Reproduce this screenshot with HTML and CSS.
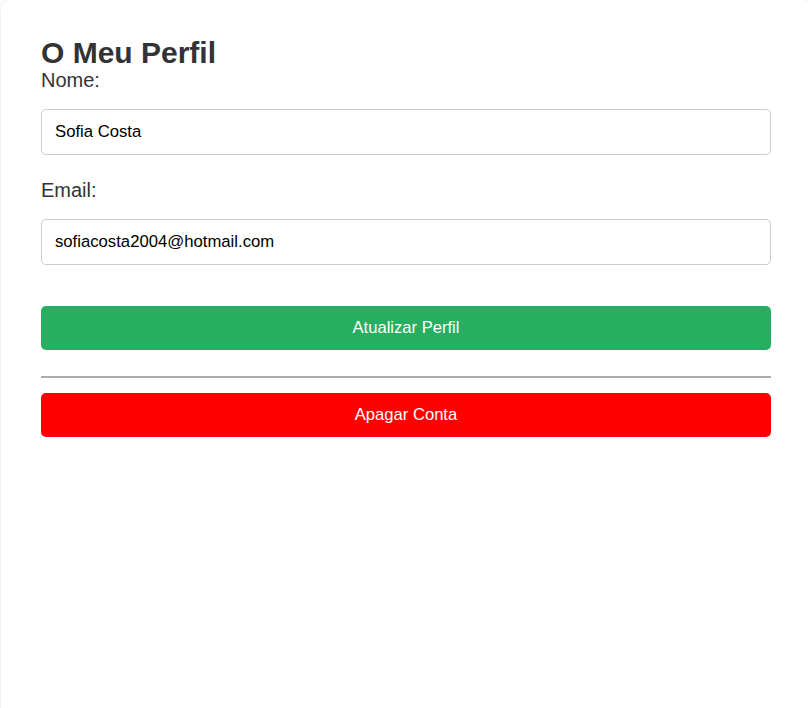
FILE: index.html
```html
<!DOCTYPE html>
<html lang="pt">
<head>
<meta charset="utf-8">
<title>O Meu Perfil</title>
<link rel="stylesheet" href="styles.css">
</head>
<body>
<div class="card">
  <h2 class="title">O Meu Perfil</h2>
  <form class="form">
    <label class="label" for="nome">Nome:</label>
    <input class="input" id="nome" type="text" value="Sofia Costa">
    <label class="label" for="email">Email:</label>
    <input class="input" id="email" type="email" value="sofiacosta2004@hotmail.com">
    <button class="btn btn-update" type="button">Atualizar Perfil</button>
  </form>
  <hr class="divider">
  <button class="btn btn-delete" type="button">Apagar Conta</button>
</div>
</body>
</html>
```

FILE: styles.css
```css
html, body {
  margin: 0;
  padding: 0;
  background: #fff;
}
body {
  font-family: "Liberation Sans", Arial, sans-serif;
  color: #333;
  overflow: hidden;
}
.card {
  box-sizing: border-box;
  width: 810px;
  min-height: 720px;
  margin-left: 1px;
  padding: 36px 40px 40px;
  background: #fff;
  border-radius: 8px;
  box-shadow: 0 0 3px rgba(0, 0, 0, 0.12);
}
.title {
  margin: 0;
  font-size: 30px;
  font-weight: bold;
  color: #333;
  line-height: 33px;
}
.form {
  display: flex;
  flex-direction: column;
}
.label {
  display: block;
  font-size: 20px;
  line-height: 23px;
  margin: 0 0 17px;
  color: #333;
}
.input {
  box-sizing: border-box;
  width: 730px;
  height: 46px;
  padding: 0 13px;
  margin: 0 0 24px;
  font-family: "Liberation Sans", Arial, sans-serif;
  font-size: 16.7px;
  color: #000;
  border: 1px solid #ccc;
  border-radius: 5px;
  background: #fff;
}
.btn {
  display: block;
  box-sizing: border-box;
  width: 730px;
  height: 44px;
  border: none;
  border-radius: 5px;
  color: #fff;
  font-family: "Liberation Sans", Arial, sans-serif;
  font-size: 16.6px;
  cursor: pointer;
}
.btn-update {
  margin-top: 17px;
  background: #27ae60;
}
.divider {
  margin: 26px 0 15px;
  border: none;
  border-top: 2px solid #aaa;
  height: 0;
}
.btn-delete {
  background: #ff0000;
}
```
